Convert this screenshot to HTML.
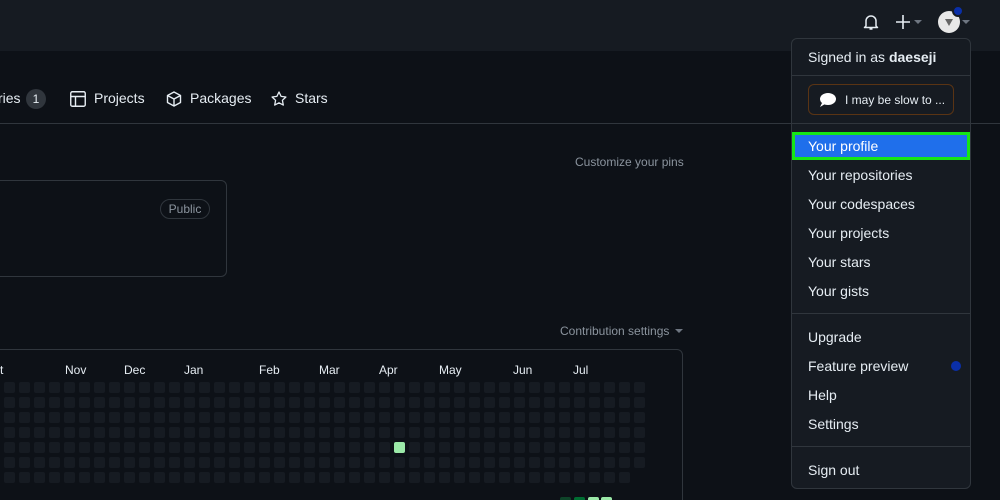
<!DOCTYPE html>
<html><head><meta charset="utf-8"><style>
*{margin:0;padding:0;box-sizing:border-box}
html,body{width:1000px;height:500px;overflow:hidden}
body{background:#0d1117;font-family:"Liberation Sans",sans-serif;color:#e6edf3;position:relative;font-size:14px}
.hdr{position:absolute;left:0;top:0;width:1000px;height:51px;background:#161b22}
.abs{position:absolute;white-space:nowrap}
.nav{top:90px;font-size:14px;color:#e6edf3}
.cnt{position:absolute;left:26px;top:89px;width:20px;height:20px;border-radius:10px;background:#30363d;font-size:12px;text-align:center;line-height:20px}
.line{position:absolute;left:0;top:123px;width:1000px;height:1px;background:#30363d}
.card{position:absolute;left:-10px;top:180px;width:237px;height:97px;border:1px solid #30363d;border-radius:6px}
.pub{position:absolute;left:160px;top:199px;width:50px;height:20px;border:1px solid #30363d;border-radius:10px;font-size:12px;color:#8b949e;text-align:center;line-height:18px}
.cal{position:absolute;left:-10px;top:349px;width:693px;height:170px;border:1px solid #30363d;border-radius:6px}
.mo{position:absolute;top:363px;font-size:12px;color:#e6edf3}
.c{position:absolute;width:11px;height:11px;border-radius:2px;background:#161b22}
.dd{position:absolute;left:791px;top:38px;width:180px;height:451px;background:#161b22;border:1px solid #30363d;border-radius:6px}
.it{position:absolute;left:16px;font-size:14px;color:#e6edf3}
.dv{position:absolute;left:0;width:178px;height:1px;background:#30363d}
</style></head><body>
<div class="hdr"></div>
<svg class="abs" style="left:863px;top:13px" width="16" height="18" viewBox="0 0 16 18"><path d="M3 13V8a5 5 0 0 1 10 0v5l1.5 1.5h-13z M6.5 16h3" fill="none" stroke="#e6edf3" stroke-width="1.5" stroke-linejoin="round"/></svg>
<svg class="abs" style="left:895px;top:14px" width="16" height="16"><path d="M8 1v14M1 8h14" stroke="#e6edf3" stroke-width="1.6"/></svg>
<div class="abs" style="left:914px;top:20px;border:4px solid transparent;border-top:4px solid #6e7681"></div>
<div class="abs" style="left:938px;top:11px;width:22px;height:22px;border-radius:50%;background:#e8e8e8"></div>
<svg class="abs" style="left:942px;top:15px" width="14" height="14"><path d="M3 4h8L7 11z" fill="#666"/></svg>
<div class="abs" style="left:952px;top:5px;width:12px;height:12px;border-radius:50%;background:#0a2fa8;border:2px solid #161b22"></div>
<div class="abs" style="left:962px;top:20px;border:4px solid transparent;border-top:4px solid #6e7681"></div>

<div class="abs nav" style="left:-2px">ries</div>
<div class="cnt">1</div>
<svg class="abs" style="left:70px;top:91px" width="16" height="16"><rect x="0.75" y="0.75" width="14.5" height="14.5" rx="1.5" fill="none" stroke="#e6edf3" stroke-width="1.4"/><path d="M1 5.5h14M5.5 5.5V15" stroke="#e6edf3" stroke-width="1.4"/></svg>
<div class="abs nav" style="left:94px">Projects</div>
<svg class="abs" style="left:166px;top:91px" width="16" height="16"><path d="M8 1l6.5 3.5v7L8 15l-6.5-3.5v-7zM1.5 4.5L8 8l6.5-3.5M8 8v7" fill="none" stroke="#e6edf3" stroke-width="1.4" stroke-linejoin="round"/></svg>
<div class="abs nav" style="left:190px">Packages</div>
<svg class="abs" style="left:271px;top:91px" width="16" height="16"><path d="M8 1l2.1 4.4 4.8.6-3.5 3.3.9 4.8L8 11.8l-4.3 2.3.9-4.8L1.1 6l4.8-.6z" fill="none" stroke="#e6edf3" stroke-width="1.3" stroke-linejoin="round"/></svg>
<div class="abs nav" style="left:295px">Stars</div>
<div class="line"></div>
<div class="abs" style="left:575px;top:155px;font-size:12px;color:#8b949e">Customize your pins</div>
<div class="card"></div>
<div class="pub">Public</div>
<div class="abs" style="left:-4px;top:323px;font-size:12px;color:#8b949e">t</div>
<div class="abs" style="left:560px;top:324px;font-size:12px;color:#8b949e">Contribution settings</div>
<div class="abs" style="left:675px;top:329px;border:4px solid transparent;border-top:4px solid #6e7681"></div>
<div class="cal"></div>
<div class="mo" style="left:-6px">ct</div><div class="mo" style="left:65px">Nov</div><div class="mo" style="left:124px">Dec</div><div class="mo" style="left:184px">Jan</div><div class="mo" style="left:259px">Feb</div><div class="mo" style="left:319px">Mar</div><div class="mo" style="left:379px">Apr</div><div class="mo" style="left:439px">May</div><div class="mo" style="left:513px">Jun</div><div class="mo" style="left:573px">Jul</div>
<div id="g"></div>
<div class="c" style="left:560px;top:497px;background:#0e4429"></div>
<div class="c" style="left:574px;top:497px;background:#006d32"></div>
<div class="c" style="left:588px;top:497px;background:#9be9a8"></div>
<div class="c" style="left:601px;top:497px;background:#9be9a8"></div>

<div class="dd">
<div class="it" style="top:10px;color:#e6edf3">Signed in as <b>daeseji</b></div>
<div class="dv" style="top:36px"></div>
<div class="abs" style="left:16px;top:45px;width:146px;height:31px;border:1px solid #5a3414;border-radius:6px"></div>
<svg class="abs" style="left:27px;top:53px" width="18" height="16"><ellipse cx="9" cy="7" rx="8" ry="6" fill="#fff"/><path d="M3 11l-2 4 5-3z" fill="#fff"/></svg>
<div class="abs" style="left:53px;top:54px;font-size:12px;color:#e6edf3">I may be slow to ...</div>
<div class="dv" style="top:84px"></div>
<div class="abs" style="left:0;top:93px;width:178px;height:28px;background:#1f6feb;border:3px solid #16e616"></div>
<div class="it" style="top:99px;color:#fff">Your profile</div>
<div class="it" style="top:128px">Your repositories</div>
<div class="it" style="top:157px">Your codespaces</div>
<div class="it" style="top:186px">Your projects</div>
<div class="it" style="top:215px">Your stars</div>
<div class="it" style="top:244px">Your gists</div>
<div class="dv" style="top:274px"></div>
<div class="it" style="top:290px">Upgrade</div>
<div class="it" style="top:319px">Feature preview</div>
<div class="abs" style="left:159px;top:322px;width:10px;height:10px;border-radius:50%;background:#0a2fa8"></div>
<div class="it" style="top:348px">Help</div>
<div class="it" style="top:377px">Settings</div>
<div class="dv" style="top:407px"></div>
<div class="it" style="top:423px">Sign out</div>
</div>
<script>
var h='';for(var i=0;i<43;i++)for(var r=0;r<7;r++){if(i==42&&r==6)continue;var x=4+i*15,y=382+r*15;var bg=(i==26&&r==4)?'#9be9a8':'#161b22';h+='<div class="c" style="left:'+x+'px;top:'+y+'px;background:'+bg+'"></div>';}
document.getElementById('g').innerHTML=h;
</script>
</body></html>
